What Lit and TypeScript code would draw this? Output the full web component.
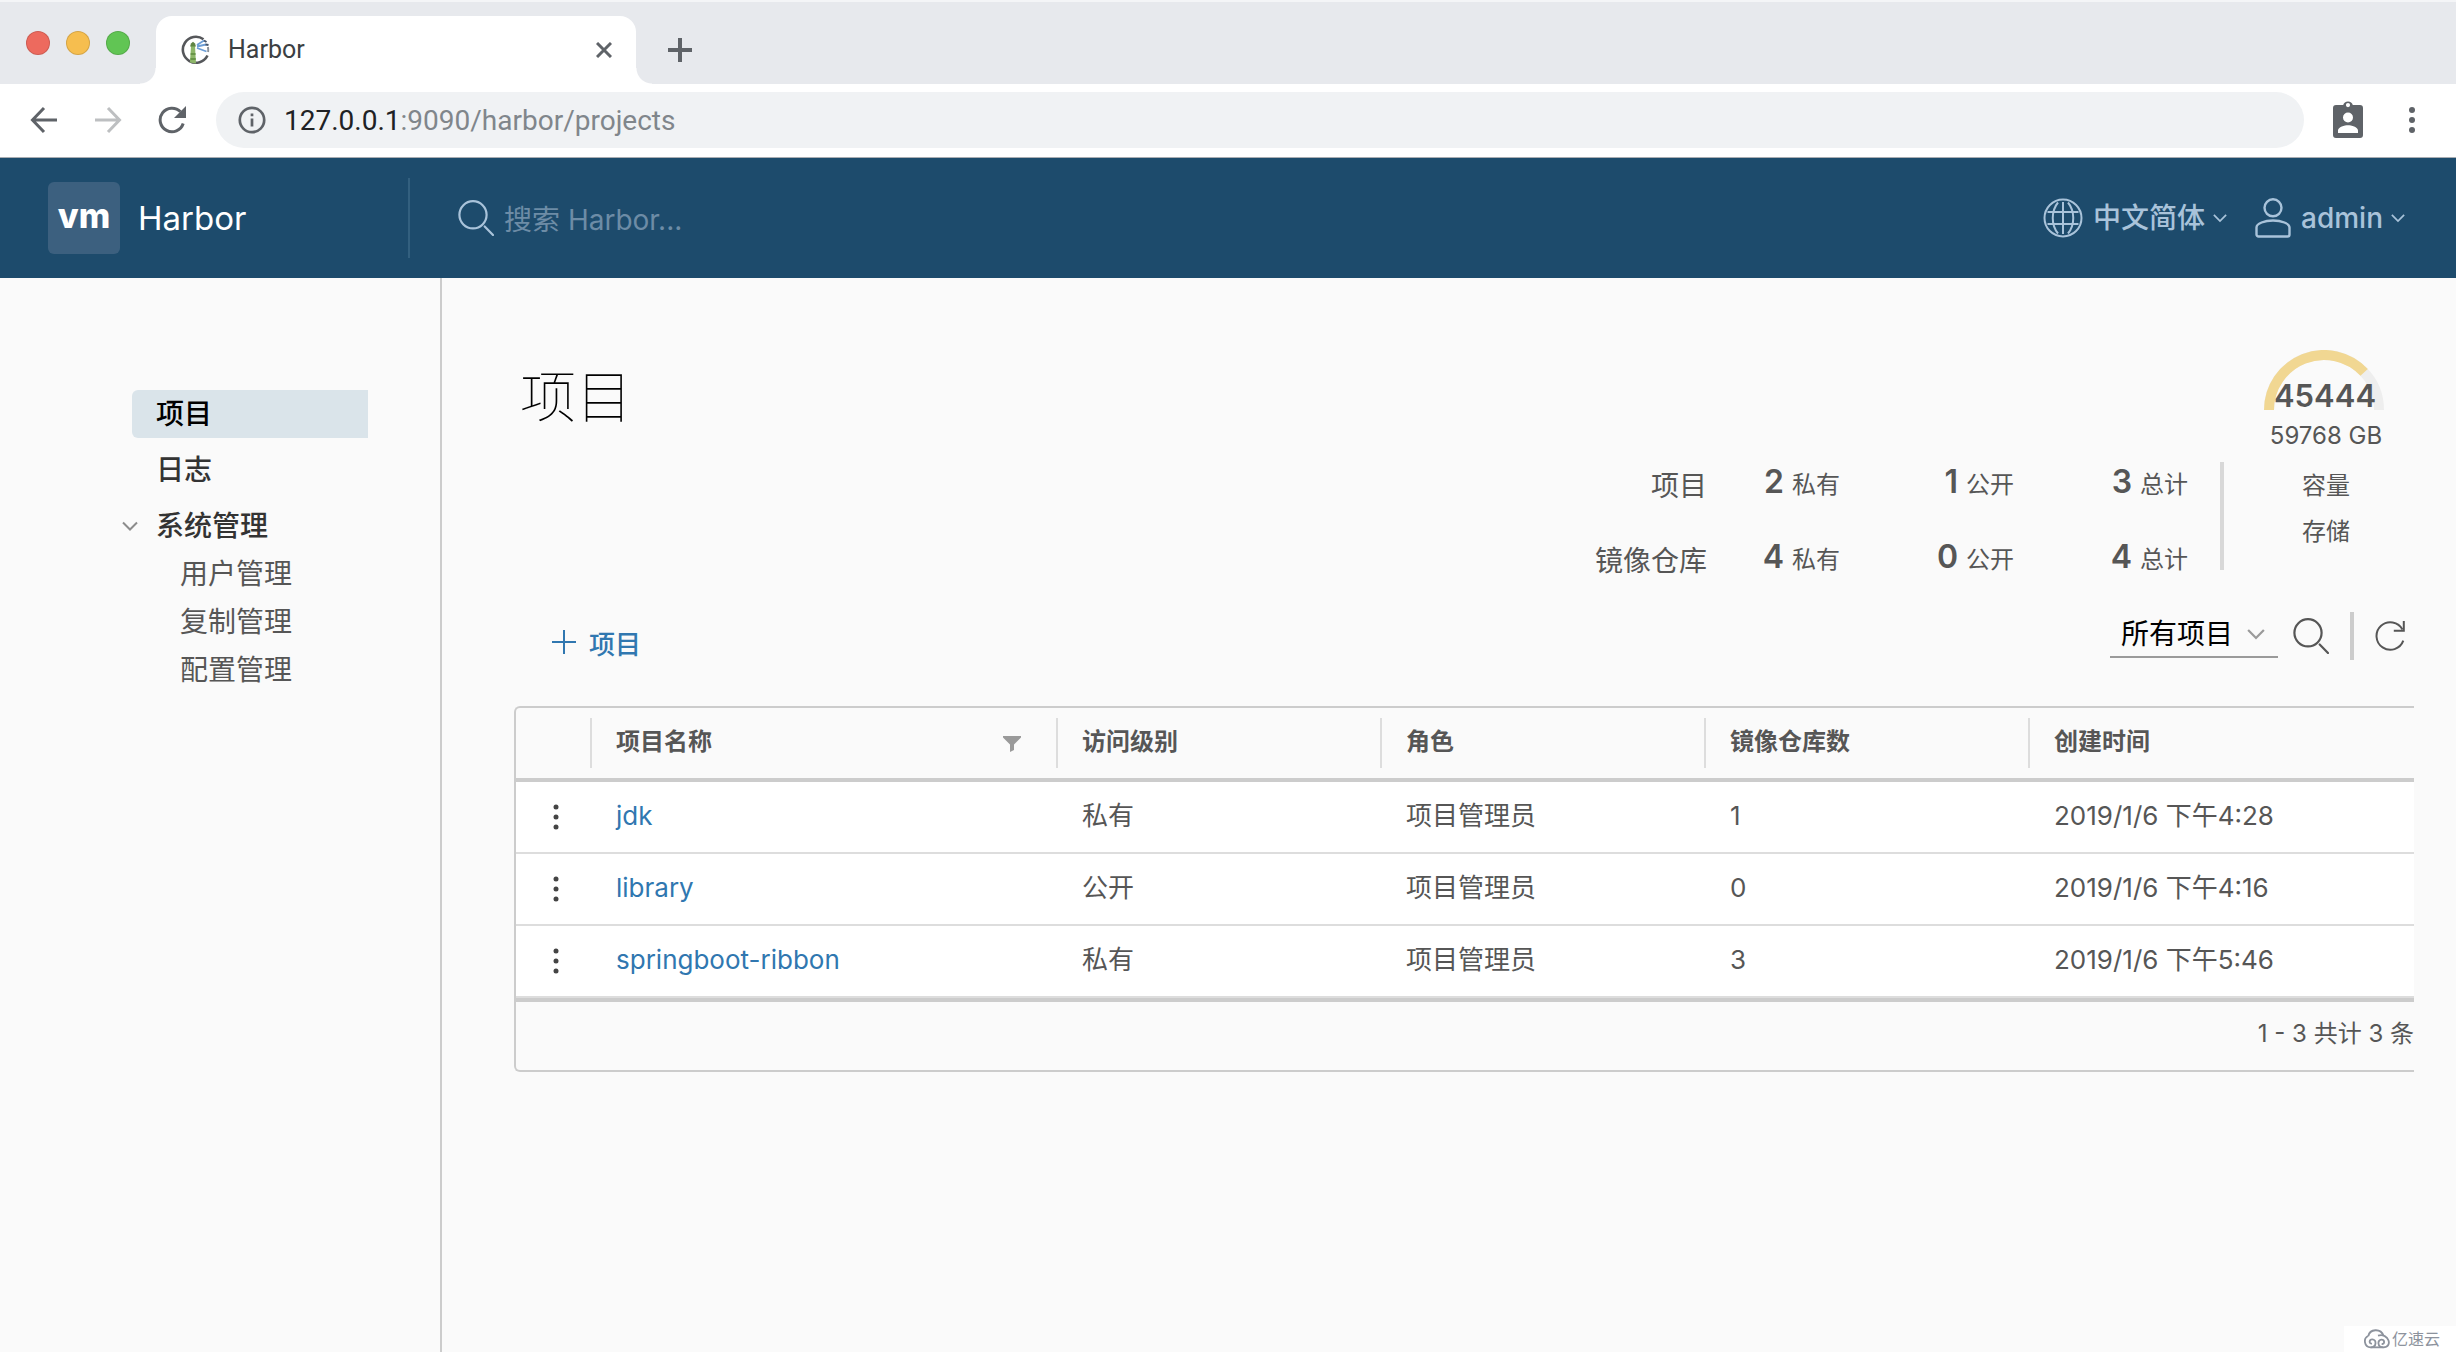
import { LitElement, html, css, svg } from "lit";
import { customElement, property } from "lit/decorators.js";

const reset = css`
  * {
    box-sizing: border-box;
  }
  button,
  input,
  select {
    margin: 0;
    padding: 0;
    border: 0;
    border-radius: 0;
    background: none;
    color: inherit;
    font: inherit;
    outline: none;
  }
  svg {
    display: block;
    flex: none;
  }
  a {
    color: inherit;
    text-decoration: none;
  }
`;

const caret = (size = 16) => html`
  <svg width=${size} height=${size} viewBox="0 0 16 16" fill="none" stroke="currentColor" stroke-width="2" aria-hidden="true">
    <path d="M1 4.5l7 7 7-7" />
  </svg>
`;

const magnifier = html`
  <svg width="36" height="36" viewBox="0 0 36 36" fill="none" stroke="currentColor" stroke-width="2.2" aria-hidden="true">
    <circle cx="15" cy="14.800" r="13.600" />
    <path d="M26.700 26.500l8.300 8.500" stroke-linecap="round" />
  </svg>
`;

@customElement("browser-chrome")
class BrowserChrome extends LitElement {
  static styles = [
    reset,
    css`
      :host {
        display: block;
        background: #fff;
        border-bottom: 1px solid #a9adb2;
        font-family: Roboto, "Noto Sans CJK SC", sans-serif;
        color: #5f6368;
      }
      .strip {
        display: flex;
        height: 84px;
        background: #e7e9ed;
        border-top: 2px solid #f4f5f7;
      }
      .lights {
        display: flex;
        gap: 16px;
        padding: 29px 26px 0;
      }
      .light {
        width: 24px;
        height: 24px;
        border-radius: 50%;
        border: 1px solid #0002;
      }
      .red {
        background: #ed6a5e;
      }
      .yellow {
        background: #f6be4f;
      }
      .green {
        background: #61c554;
      }
      .tab {
        position: relative;
        display: flex;
        align-items: center;
        width: 480px;
        margin-top: 14px;
        padding: 0 24px 0 25px;
        background: #fff;
        border-radius: 16px 16px 0 0;
      }
      .tab::before,
      .tab::after {
        content: "";
        position: absolute;
        bottom: 0;
        width: 16px;
        height: 16px;
      }
      .tab::before {
        right: 100%;
        background: radial-gradient(circle at 0 0, #e7e9ed 15px, #fff 16px);
      }
      .tab::after {
        left: 100%;
        background: radial-gradient(circle at 100% 0, #e7e9ed 15px, #fff 16px);
      }
      .tab-title {
        flex: 1;
        padding-left: 17px;
        font-size: 25px;
        line-height: 32px;
        color: #3c4043;
      }
      .new-tab {
        align-self: flex-start;
        margin: 36px 0 0 32px;
      }
      .bar {
        display: flex;
        align-items: center;
        height: 73px;
        padding: 0 30px 1px;
      }
      .nav {
        display: flex;
        gap: 36px;
      }
      .dim {
        color: #bdbfc1;
      }
      .address {
        flex: 1;
        display: flex;
        align-items: center;
        gap: 17px;
        height: 56px;
        margin-left: 30px;
        padding-left: 22px;
        border-radius: 28px;
        background: #f0f2f4;
      }
      .url {
        flex: 1;
        padding: 2px 0 0 1px;
        font-size: 28px;
        line-height: 36px;
        color: #80868b;
        outline: none;
      }
      .domain {
        color: #202124;
      }
      .profile {
        margin-left: 29px;
        padding-bottom: 2px;
      }
      .more {
        margin: 0 11px 0 46px;
      }
    `,
  ];

  render() {
    return html`
      <div class="strip">
        <div class="lights">
          <span class="light red"></span><span class="light yellow"></span><span class="light green"></span>
        </div>
        <div class="tab">
          <svg width="30" height="30" viewBox="0 0 30 30" fill="none" aria-hidden="true">
            <path d="M26.5 20.5A13 13 0 1 1 22.5 4.2" stroke="#55575a" stroke-width="2.6" />
            <path d="M26.9 12a13 13 0 0 1 .2 5" stroke="#8a9099" stroke-width="2" />
            <path d="M9 27.5l1-16.5h4l1 17.5z" fill="#8db668" />
            <path d="M9.6 19h5M9.4 24h5.4" stroke="#5c8a3c" stroke-width="1.6" />
            <path d="M9 11.500l1-3 2-1.700 2 1.700 1 3z" fill="#5f8444" />
            <path d="M16 10l7-4.500M16 11.500l9-2M16 13l9.500 3.500" stroke="#6d9ed6" stroke-width="1.8" />
            <path d="M23 5.500l2.500 1.500M24.500 9.500l3 .500" stroke="#44546a" stroke-width="2" />
          </svg>
          <span class="tab-title">Harbor</span>
          <button aria-label="Close tab">
            <svg width="16" height="16" viewBox="0 0 16 16" fill="none" stroke="currentColor" stroke-width="3">
              <path d="M1 1l14 14M15 1L1 15" />
            </svg>
          </button>
        </div>
        <button class="new-tab" aria-label="New tab">
          <svg width="24" height="24" viewBox="0 0 24 24" fill="none" stroke="currentColor" stroke-width="4">
            <path d="M12 0v24M0 12h24" />
          </svg>
        </button>
      </div>
      <div class="bar">
        <div class="nav">
          <button aria-label="Back">
            <svg width="28" height="28" viewBox="0 0 28 28" fill="none" stroke="currentColor" stroke-width="3">
              <path d="M27 14H3M14 2L2.500 14 14 26" />
            </svg>
          </button>
          <button class="dim" aria-label="Forward">
            <svg width="28" height="28" viewBox="0 0 28 28" fill="none" stroke="currentColor" stroke-width="3">
              <path d="M1 14h24M14 2l11.500 12L14 26" />
            </svg>
          </button>
          <button aria-label="Reload">
            <svg width="28" height="28" viewBox="0 0 28 28" fill="none" stroke="currentColor" stroke-width="3">
              <path d="M25.200 17.500A11.800 11.800 0 1 1 22.500 5.800" />
              <path d="M28 0v12H16z" fill="currentColor" stroke="none" />
            </svg>
          </button>
        </div>
        <div class="address">
          <svg width="28" height="28" viewBox="0 0 28 28" fill="none" stroke="currentColor" stroke-width="2.700" aria-hidden="true">
            <circle cx="14" cy="14" r="12.200" />
            <path d="M14 12.500v8M14 7.500v2.800" />
          </svg>
          <div class="url" role="textbox" aria-label="Address" contenteditable="true"><span class="domain">127.0.0.1</span>:9090/harbor/projects</div>
        </div>
        <button class="profile" aria-label="Profile">
          <svg width="30" height="38" viewBox="0 0 30 38">
            <path
              fill="currentColor"
              fill-rule="evenodd"
              d="M3 5h7.200a5 5 0 0 1 9.600 0H27a3 3 0 0 1 3 3v27a3 3 0 0 1-3 3H3a3 3 0 0 1-3-3V8a3 3 0 0 1 3-3zM15 3a2 2 0 1 0 0 4.200A2 2 0 0 0 15 3zM15 12.500a5 5 0 1 0 0 10 5 5 0 0 0 0-10zM5 33h20v-2.500c0-3.300-6.700-5.200-10-5.200S5 27.200 5 30.500z"
            />
          </svg>
        </button>
        <button class="more" aria-label="Browser menu">
          <svg width="6" height="28" viewBox="0 0 6 28" fill="currentColor">
            <circle cx="3" cy="4" r="3" />
            <circle cx="3" cy="14" r="3" />
            <circle cx="3" cy="24" r="3" />
          </svg>
        </button>
      </div>
    `;
  }
}

@customElement("harbor-header")
class HarborHeader extends LitElement {
  static styles = [
    reset,
    css`
      :host {
        display: flex;
        align-items: center;
        height: 120px;
        padding: 0 51px 0 48px;
        background: #1d4b6c;
        color: #a9c3da;
      }
      .brand {
        display: flex;
        align-items: center;
        gap: 18px;
        width: 362px;
        height: 80px;
        border-right: 2px solid #33607f;
        color: #fff;
        font-size: 33px;
        line-height: 40px;
      }
      .logo {
        display: flex;
        justify-content: center;
        width: 72px;
        height: 72px;
        padding-top: 14px;
        border-radius: 6px;
        background: #3c607f;
        font-size: 34px;
        font-weight: 800;
      }
      .search {
        flex: 1;
        display: flex;
        align-items: center;
        gap: 10px;
        padding-left: 48px;
      }
      .search-box {
        flex: 1;
        height: 40px;
        font-size: 28px;
        padding-top: 4px;
      }
      .search-box::placeholder {
        color: #6d8ca6;
        opacity: 1;
      }
      .menu {
        display: flex;
        align-items: center;
        font-size: 28px;
        font-weight: 500;
        line-height: 40px;
      }
      .label {
        margin: 0 8px 0 10px;
      }
      .user {
        margin-left: 28px;
      }
    `,
  ];

  render() {
    return html`
      <a class="brand" href="#"><span class="logo">vm</span><span>Harbor</span></a>
      <label class="search">
        ${magnifier}
        <input class="search-box" type="text" placeholder="搜索 Harbor..." aria-label="搜索 Harbor" />
      </label>
      <button class="menu">
        <svg width="40" height="40" viewBox="0 0 40 40" fill="none" stroke="currentColor" stroke-width="2" aria-hidden="true">
          <circle cx="20" cy="20" r="18.500" />
          <path d="M20 4v32M4.500 14h31M4.500 26h31M15 4.500C8 13 8 27 15 35.500M25 4.500C32 13 32 27 25 35.500" />
        </svg>
        <span class="label">中文简体</span>${caret(14)}
      </button>
      <button class="menu user">
        <svg width="36" height="40" viewBox="0 0 36 40" fill="none" stroke="currentColor" stroke-width="2.400" aria-hidden="true">
          <circle cx="18" cy="9.800" r="8.500" />
          <path d="M1.500 36.500v-7c0-4 8-7 16.500-7s16.500 3 16.500 7v7a2 2 0 0 1-2 2h-29a2 2 0 0 1-2-2z" />
        </svg>
        <span class="label">admin</span>${caret(14)}
      </button>
    `;
  }
}

@customElement("side-nav")
class SideNav extends LitElement {
  static styles = [
    reset,
    css`
      :host {
        display: block;
        flex: none;
        width: 442px;
        padding: 112px 72px 0 132px;
        border-right: 2px solid #ccc;
        font-size: 28px;
        line-height: 48px;
        color: #565656;
      }
      .item,
      .group {
        display: block;
        padding-left: 24px;
        margin-bottom: 8px;
        border-radius: 6px 0 0 6px;
        font-weight: 500;
        color: #333;
      }
      .active {
        background: #dae4ea;
        color: #000;
      }
      .group {
        display: flex;
        align-items: center;
        gap: 18px;
        margin: 0 0 0 -10px;
        padding-left: 0;
      }
      .group svg {
        color: #8c8c8c;
      }
      .child {
        display: block;
        padding-left: 48px;
      }
      .text {
        display: block;
        padding-top: 1px;
        line-height: 47px;
      }
    `,
  ];

  render() {
    return html`
      <nav>
        <a class="item active" href="#projects"><span class="text">项目</span></a>
        <a class="item" href="#logs"><span class="text">日志</span></a>
        <button class="group" aria-expanded="true">${caret()}<span class="text">系统管理</span></button>
        ${["用户管理", "复制管理", "配置管理"].map(
          (t) => html`<a class="child" href="#${t}"><span class="text">${t}</span></a>`
        )}
      </nav>
    `;
  }
}

@customElement("storage-gauge")
class StorageGauge extends LitElement {
  @property({ type: Number }) free = 0;
  @property({ type: Number }) total = 1;

  static styles = [
    reset,
    css`
      :host {
        display: block;
        width: 124px;
        font-size: 24px;
        line-height: 46px;
        text-align: center;
        white-space: nowrap;
      }
      .dial {
        position: relative;
        margin-bottom: 10px;
      }
      .value {
        position: absolute;
        inset: 25px 2px auto 0;
        font-size: 31px;
        font-weight: 600;
        line-height: 42px;
      }
      .total {
        margin-bottom: 11px;
        line-height: 32px;
      }
    `,
  ];

  render() {
    const angle = Math.PI * (1 - this.free / this.total);
    const x = 60 + 55 * Math.cos(angle);
    const y = 60 - 55 * Math.sin(angle);
    return html`
      <div class="dial">
        <svg width="120" height="60" viewBox="0 0 120 60" fill="none" stroke-width="10" aria-hidden="true">
          <path d="M5 60A55 55 0 0 1 115 60" stroke="#eee" />
          ${svg`<path d="M5 60A55 55 0 0 1 ${x} ${y}" stroke="#f1d792" />`}
        </svg>
        <div class="value">${this.free}</div>
      </div>
      <div class="total">${this.total} GB</div>
      <div>容量</div>
      <div>存储</div>
    `;
  }
}

@customElement("project-stats")
class ProjectStats extends LitElement {
  static styles = [
    reset,
    css`
      :host {
        display: flex;
        align-items: flex-start;
      }
      .grid {
        display: grid;
        grid-template-columns: auto 133px 174px 174px;
        grid-auto-rows: 75px;
        align-items: center;
        justify-items: end;
        margin: 98px 32px 0 0;
        font-size: 24px;
        line-height: 40px;
      }
      .name {
        font-size: 28px;
      }
      .stat {
        display: flex;
        align-items: baseline;
        gap: 8px;
        padding-bottom: 4px;
      }
      .count {
        font-size: 32px;
        font-weight: 600;
      }
      .rule {
        width: 4px;
        height: 108px;
        margin: 112px 40px 0 0;
        background: #d8d8d8;
      }
    `,
  ];

  private rows = [
    { name: "项目", counts: [2, 1, 3] },
    { name: "镜像仓库", counts: [4, 0, 4] },
  ];

  render() {
    const kinds = ["私有", "公开", "总计"];
    return html`
      <div class="grid">
        ${this.rows.map(
          (r) => html`
            <span class="name">${r.name}</span>
            ${r.counts.map((c, i) => html`<span class="stat"><span class="count">${c}</span><span>${kinds[i]}</span></span>`)}
          `
        )}
      </div>
      <div class="rule"></div>
      <storage-gauge .free=${45444} .total=${59768}></storage-gauge>
    `;
  }
}

@customElement("project-grid")
class ProjectGrid extends LitElement {
  static styles = [
    reset,
    css`
      :host {
        display: block;
        border: 2px solid #ccc;
        border-right: 0;
        border-radius: 6px 0 0 6px;
      }
      .table {
        width: 100%;
        table-layout: fixed;
        border-collapse: separate;
        border-spacing: 0;
        font-size: 26px;
        line-height: 40px;
      }
      .menu-col {
        width: 74px;
      }
      .name-col {
        width: 466px;
      }
      .data-col {
        width: 324px;
      }
      .head {
        height: 74px;
        padding: 0;
        border-bottom: 4px solid #ccc;
        font-size: 24px;
        font-weight: 600;
        text-align: left;
      }
      .head-cell {
        display: flex;
        align-items: center;
        justify-content: space-between;
        height: 50px;
        padding: 0 35px 2px 24px;
        border-left: 2px solid #ddd;
      }
      .cell {
        height: 72px;
        padding: 0 0 3px 26px;
        background: #fff;
        border-bottom: 2px solid #ddd;
      }
      .menu-cell {
        padding: 0 0 0 37px;
      }
      .link {
        color: #3077b0;
      }
      .foot {
        height: 72px;
        padding-top: 12px;
        border-top: 4px solid #ccc;
        font-size: 24px;
        line-height: 40px;
        text-align: right;
      }
      .filter {
        padding-top: 3px;
        color: #9a9a9a;
      }
      .row-menu {
        display: block;
      }
    `,
  ];

  private rows = [
    ["jdk", "私有", "项目管理员", "1", "2019/1/6 下午4:28"],
    ["library", "公开", "项目管理员", "0", "2019/1/6 下午4:16"],
    ["springboot-ribbon", "私有", "项目管理员", "3", "2019/1/6 下午5:46"],
  ];

  render() {
    return html`
      <table class="table">
        <colgroup>
          <col class="menu-col" />
          <col class="name-col" />
          <col class="data-col" />
          <col class="data-col" />
          <col class="data-col" />
          <col />
        </colgroup>
        <thead>
          <tr>
            <th class="head"></th>
            <th class="head">
              <div class="head-cell">
                项目名称
                <button class="filter" aria-label="筛选">
                  <svg width="18" height="16" viewBox="0 0 18 16" fill="currentColor">
                    <path d="M0 0h18v1.500L11 8.500V14l-4 2V8.500L0 1.500z" />
                  </svg>
                </button>
              </div>
            </th>
            ${["访问级别", "角色", "镜像仓库数", "创建时间"].map((h) => html`<th class="head"><div class="head-cell">${h}</div></th>`)}
          </tr>
        </thead>
        <tbody>
          ${this.rows.map(
            ([name, ...rest]) => html`
              <tr>
                <td class="cell menu-cell">
                  <button class="row-menu" aria-label="${name} 操作">
                    <svg width="6" height="28" viewBox="0 0 6 28" fill="#444">
                      <circle cx="3" cy="4" r="2.500" />
                      <circle cx="3" cy="14" r="2.500" />
                      <circle cx="3" cy="24" r="2.500" />
                    </svg>
                  </button>
                </td>
                <td class="cell"><a class="link" href="#${name}">${name}</a></td>
                ${rest.map((v) => html`<td class="cell">${v}</td>`)}
              </tr>
            `
          )}
        </tbody>
      </table>
      <div class="foot">1 - 3 共计 3 条</div>
    `;
  }
}

@customElement("app-root")
class AppRoot extends LitElement {
  static styles = [
    reset,
    css`
      :host {
        display: flex;
        flex-direction: column;
        position: relative;
        min-height: 100vh;
        background: #fafafa;
        color: #565656;
        font-family: Inter, "Noto Sans CJK SC", sans-serif;
      }
      .body {
        flex: 1;
        display: flex;
      }
      .main {
        flex: 1;
        min-width: 0;
        padding: 72px 42px 0 72px;
      }
      .top {
        display: flex;
        justify-content: space-between;
        align-items: flex-start;
        padding-right: 26px;
      }
      .title {
        margin: 17px 0 0 6px;
        font-size: 56px;
        font-weight: 100;
        line-height: 60px;
        color: #000;
      }
      .tools {
        display: flex;
        justify-content: space-between;
        align-items: flex-start;
        height: 94px;
        margin-top: 14px;
        padding: 0 9px 0 38px;
      }
      .add {
        display: flex;
        align-items: center;
        gap: 13px;
        height: 60px;
        font-size: 26px;
        font-weight: 500;
        color: #3077b0;
      }
      .filters {
        display: flex;
        align-items: center;
        height: 48px;
        color: #565656;
      }
      .pick {
        display: grid;
        align-items: center;
        width: 168px;
        height: 46px;
        margin: 0 15px 2px 0;
        border-bottom: 2px solid #9a9a9a;
      }
      .select {
        grid-area: 1 / 1;
        appearance: none;
        height: 44px;
        padding: 0 0 0 11px;
        font-size: 28px;
        color: #000;
      }
      .pick svg {
        grid-area: 1 / 1;
        justify-self: end;
        margin-right: 13px;
        pointer-events: none;
        color: #9a9a9a;
      }
      .rule {
        width: 4px;
        height: 48px;
        margin: 0 21px;
        background: #ccc;
      }
      .mark {
        position: absolute;
        right: 0;
        bottom: 0;
        display: flex;
        align-items: center;
        gap: 2px;
        height: 26px;
        padding: 0 16px 0 20px;
        background: #fff;
        font-size: 16px;
        line-height: 24px;
        color: #8d939d;
      }
    `,
  ];

  render() {
    return html`
      <browser-chrome></browser-chrome>
      <harbor-header></harbor-header>
      <div class="body">
        <side-nav></side-nav>
        <main class="main">
          <div class="top">
            <h1 class="title">项目</h1>
            <project-stats></project-stats>
          </div>
          <div class="tools">
            <button class="add">
              <svg width="24" height="24" viewBox="0 0 24 24" fill="none" stroke="currentColor" stroke-width="2" aria-hidden="true">
                <path d="M12 0v24M0 12h24" />
              </svg>
              项目
            </button>
            <div class="filters">
              <label class="pick">
                <select class="select" aria-label="项目筛选">
                  <option>所有项目</option>
                </select>
                ${caret(18)}
              </label>
              <button aria-label="搜索">${magnifier}</button>
              <div class="rule"></div>
              <button aria-label="刷新">
                <svg width="30" height="32" viewBox="0 0 30 32" fill="none" stroke="currentColor" stroke-width="2">
                  <path d="M28.300 20.700A13.800 13.800 0 1 1 27.500 9.500" />
                  <path d="M28.800 1v9.800h-10" />
                </svg>
              </button>
            </div>
          </div>
          <project-grid></project-grid>
        </main>
      </div>
      <div class="mark">
        <svg width="26" height="20" viewBox="0 0 78 60" fill="none" stroke="currentColor" stroke-width="5.500" aria-hidden="true">
          <path d="M13 21C17 0 50-4 59 21" />
          <path d="M13 21C-3 27 0 55 20 55C39 55 38 31 25 31C15 31 14 45 24 44" />
          <path d="M42 20C74 10 88 55 58 55C39 55 40 32 52 32C63 32 63 46 53 45" />
          <path d="M20 55h38" />
        </svg>
        <span>亿速云</span>
      </div>
    `;
  }
}
